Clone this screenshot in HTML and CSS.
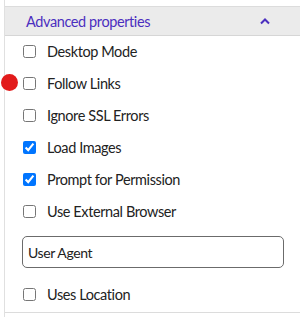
FILE: index.html
```html
<!DOCTYPE html>
<html lang="en">
<head>
    <meta charset="UTF-8">
    <meta name="viewport" content="width=device-width, initial-scale=1.0">
    <title>Advanced properties</title>
    <link rel="stylesheet" href="styles.css">
</head>
<body>
    <div class="sidebar">
        <div class="section">
            <div class="section-header">
                <span class="section-title">Advanced properties</span>
                <svg class="chevron" width="12" height="8" viewBox="0 0 12 8">
                    <path d="M2 6.5 L6 2.5 L10 6.5" fill="none" stroke="#4b2fbf" stroke-width="2"/>
                </svg>
            </div>
            <div class="options">
                <label class="option"><input type="checkbox"> Desktop Mode</label>
                <label class="option"><span class="dot"></span><input type="checkbox"> Follow Links</label>
                <label class="option"><input type="checkbox"> Ignore SSL Errors</label>
                <label class="option"><input type="checkbox" checked> Load Images</label>
                <label class="option"><input type="checkbox" checked> Prompt for Permission</label>
                <label class="option"><input type="checkbox"> Use External Browser</label>
                <div class="field">
                    <input type="text" class="text-input" value="User Agent">
                </div>
                <label class="option"><input type="checkbox"> Uses Location</label>
            </div>
        </div>
    </div>
</body>
</html>
```

FILE: styles.css
```css
body {
    margin: 0;
    background-color: #fff;
    font-family: Lato, "Open Sans", sans-serif;
    color: #222;
}
.sidebar {
    margin-left: 4px;
    height: 100vh;
    border-left: 1px solid #e0e0e0;
    padding-top: 6px;
    box-sizing: border-box;
}
.section {
    border-top: 1px solid #dcdcdc;
    border-bottom: 1px solid #dcdcdc;
}
.section-header {
    display: flex;
    align-items: center;
    justify-content: space-between;
    height: 28px;
    padding: 0 29px 0 21px;
    background-color: #ebebeb;
    border-bottom: 1px solid #d6d6d6;
}
.section-title {
    font-size: 14.5px;
    letter-spacing: -0.4px;
    color: #4b2fbf;
}
.chevron {
    display: block;
}
.options {
    display: flex;
    flex-direction: column;
    padding-bottom: 1px;
}
.option {
    position: relative;
    display: flex;
    align-items: center;
    gap: 11px;
    height: 32px;
    box-sizing: border-box;
    padding: 0 0 2px 18px;
    font-size: 14.5px;
    letter-spacing: -0.4px;
    color: #222;
}
.option input {
    margin: 0;
    width: 13px;
    height: 13px;
}
.dot {
    position: absolute;
    left: -4px;
    top: 6px;
    width: 17px;
    height: 17px;
    border-radius: 50%;
    background-color: #e21b1b;
}
.field {
    padding: 8px 16px 11px 17px;
}
.text-input {
    display: block;
    width: 100%;
    height: 32px;
    box-sizing: border-box;
    border: 1px solid #6b6b6b;
    border-radius: 5px;
    padding: 0 5px;
    font-family: Lato, "Open Sans", sans-serif;
    font-size: 14px;
    letter-spacing: -0.4px;
    color: #222;
    background: #fff;
}
```
